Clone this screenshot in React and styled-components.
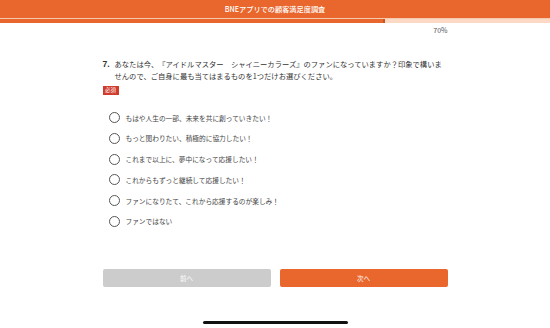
import React from 'react';
import styled, { createGlobalStyle } from 'styled-components';

const options = [
  'もはや人生の一部、未来を共に創っていきたい！',
  'もっと関わりたい、積極的に協力したい！',
  'これまで以上に、夢中になって応援したい！',
  'これからもずっと継続して応援したい！',
  'ファンになりたて、これから応援するのが楽しみ！',
  'ファンではない',
];

const App = () => {
  return (
    <Page>
      <GlobalStyle />
      <Header>BNEアプリでの顧客満足度調査</Header>
      <ProgressTrack>
        <ProgressFill style={{ width: '70%' }} />
      </ProgressTrack>
      <Content>
        <Percent>70%</Percent>
        <Question>
          <QNumber>7.</QNumber>
          <QText>
            あなたは今、『アイドルマスター　シャイニーカラーズ』のファンになっていますか？印象で構いませんので、ご自身に最も当てはまるものを1つだけお選びください。
          </QText>
        </Question>
        <Required>必須</Required>
        <OptionList>
          {options.map((o) => (
            <Option key={o}>
              <Radio />
              <OptionLabel>{o}</OptionLabel>
            </Option>
          ))}
        </OptionList>
      </Content>
      <Buttons>
        <NavButton $disabled>前へ</NavButton>
        <NavButton>次へ</NavButton>
      </Buttons>
      <HomeBar />
    </Page>
  );
};

export default App;

const GlobalStyle = createGlobalStyle`
  html, body {
    margin: 0;
    padding: 0;
    background: #fff;
  }
  body {
    font-family: "Noto Sans CJK JP", "Noto Sans", sans-serif;
    text-spacing-trim: space-all;
  }
`;

const Page = styled.div`
  width: 550px;
  height: 328px;
  display: flex;
  flex-direction: column;
  align-items: center;
  overflow: hidden;
`;

const Header = styled.div`
  width: 100%;
  height: 18px;
  background: #e9672d;
  color: #fff;
  font-size: 7.2px;
  font-weight: 500;
  display: flex;
  align-items: center;
  justify-content: center;
  border-bottom: 1px solid #f5c9ad;
`;

const ProgressTrack = styled.div`
  width: 100%;
  height: 4px;
  background: #fcd9c5;
  display: flex;
`;

const ProgressFill = styled.div`
  height: 100%;
  background: #e9672d;
  border-right: 2px solid #c9561f;
  box-sizing: border-box;
`;

const Content = styled.div`
  width: 345px;
  display: flex;
  flex-direction: column;
  flex: 1;
`;

const Percent = styled.div`
  align-self: flex-end;
  font-size: 7px;
  color: #555;
  margin-top: 2px;
  line-height: 10px;
`;

const Question = styled.div`
  display: flex;
  margin-top: 23px;
  color: #333;
`;

const QNumber = styled.div`
  font-family: "Liberation Sans", sans-serif;
  font-weight: 700;
  font-size: 8.5px;
  width: 12px;
  line-height: 12px;
  flex-shrink: 0;
`;

const QText = styled.div`
  font-size: 7.3px;
  line-height: 12px;
`;

const Required = styled.span`
  align-self: flex-start;
  margin-top: 4px;
  background: #cf3b2c;
  color: #fff;
  font-size: 5.5px;
  padding: 1px 2.5px;
  line-height: 6.5px;
`;

const OptionList = styled.div`
  display: flex;
  flex-direction: column;
  gap: 10.2px;
  margin-top: 18px;
  padding-left: 6px;
`;

const Option = styled.div`
  display: flex;
  align-items: center;
  gap: 6px;
  height: 10.5px;
`;

const Radio = styled.span`
  width: 9px;
  height: 9px;
  border: 1px solid #555;
  border-radius: 50%;
  flex-shrink: 0;
`;

const OptionLabel = styled.span`
  font-size: 6.7px;
  color: #444;
`;

const Buttons = styled.div`
  width: 345px;
  display: flex;
  gap: 9px;
  margin-bottom: 34px;
`;

const NavButton = styled.div`
  flex: 1;
  height: 18px;
  border-radius: 2px;
  background: ${({ $disabled }) => ($disabled ? '#cccccc' : '#e9672d')};
  color: #fff;
  font-size: 6.5px;
  display: flex;
  align-items: center;
  justify-content: center;
`;

const HomeBar = styled.div`
  width: 145px;
  height: 3px;
  border-radius: 2px;
  background: #111;
  margin-bottom: 4px;
`;
